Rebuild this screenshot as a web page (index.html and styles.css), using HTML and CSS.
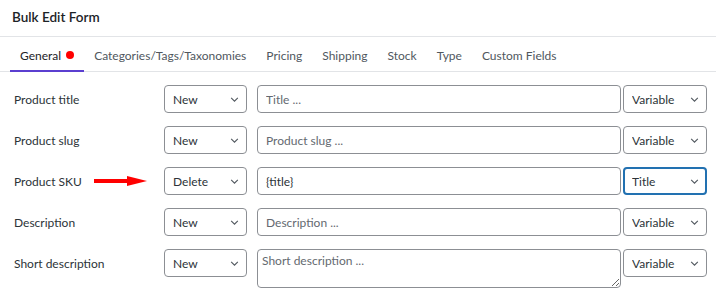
FILE: index.html
```html
<!DOCTYPE html>
<html lang="en">

<head>
    <meta charset="UTF-8" />
    <meta name="viewport" content="width=device-width, initial-scale=1.0" />
    <title>Bulk Edit Form</title>
    <link rel="stylesheet" href="styles.css">
</head>

<body>

    <div class="panel">
        <div class="panel-head">Bulk Edit Form</div>

        <nav class="tabs">
            <a class="tab active" href="#">General <span class="dot"></span></a>
            <a class="tab" href="#">Categories/Tags/Taxonomies</a>
            <a class="tab" href="#">Pricing</a>
            <a class="tab" href="#">Shipping</a>
            <a class="tab" href="#">Stock</a>
            <a class="tab" href="#">Type</a>
            <a class="tab" href="#">Custom Fields</a>
        </nav>

        <form class="fields">
            <div class="row">
                <label class="label">Product title</label>
                <div class="select-wrap action">
                    <select><option>New</option><option>Delete</option></select>
                    <svg class="chev" viewBox="0 0 10 6"><path d="M1 1l4 4 4-4" /></svg>
                </div>
                <input class="text" type="text" placeholder="Title ...">
                <div class="select-wrap var">
                    <select><option>Variable</option><option>Title</option></select>
                    <svg class="chev" viewBox="0 0 10 6"><path d="M1 1l4 4 4-4" /></svg>
                </div>
            </div>

            <div class="row">
                <label class="label">Product slug</label>
                <div class="select-wrap action">
                    <select><option>New</option><option>Delete</option></select>
                    <svg class="chev" viewBox="0 0 10 6"><path d="M1 1l4 4 4-4" /></svg>
                </div>
                <input class="text" type="text" placeholder="Product slug ...">
                <div class="select-wrap var">
                    <select><option>Variable</option><option>Title</option></select>
                    <svg class="chev" viewBox="0 0 10 6"><path d="M1 1l4 4 4-4" /></svg>
                </div>
            </div>

            <div class="row">
                <label class="label">Product SKU</label>
                <svg class="arrow" viewBox="0 0 54 12">
                    <rect x="0" y="4" width="35" height="4" />
                    <polygon points="33,1 53,6 33,11" />
                </svg>
                <div class="select-wrap action">
                    <select><option>Delete</option><option>New</option></select>
                    <svg class="chev" viewBox="0 0 10 6"><path d="M1 1l4 4 4-4" /></svg>
                </div>
                <input class="text" type="text" value="{title}">
                <div class="select-wrap var focus">
                    <select><option>Title</option><option>Variable</option></select>
                    <svg class="chev" viewBox="0 0 10 6"><path d="M1 1l4 4 4-4" /></svg>
                </div>
            </div>

            <div class="row">
                <label class="label">Description</label>
                <div class="select-wrap action">
                    <select><option>New</option><option>Delete</option></select>
                    <svg class="chev" viewBox="0 0 10 6"><path d="M1 1l4 4 4-4" /></svg>
                </div>
                <input class="text" type="text" placeholder="Description ...">
                <div class="select-wrap var">
                    <select><option>Variable</option><option>Title</option></select>
                    <svg class="chev" viewBox="0 0 10 6"><path d="M1 1l4 4 4-4" /></svg>
                </div>
            </div>

            <div class="row row-top">
                <label class="label">Short description</label>
                <div class="select-wrap action">
                    <select><option>New</option><option>Delete</option></select>
                    <svg class="chev" viewBox="0 0 10 6"><path d="M1 1l4 4 4-4" /></svg>
                </div>
                <textarea class="text area" placeholder="Short description ..."></textarea>
                <div class="select-wrap var">
                    <select><option>Variable</option><option>Title</option></select>
                    <svg class="chev" viewBox="0 0 10 6"><path d="M1 1l4 4 4-4" /></svg>
                </div>
            </div>
        </form>
    </div>

</body>

</html>
```

FILE: styles.css
```css
* {
    box-sizing: border-box;
}

body {
    margin: 0;
    background: #fff;
    font-family: "Lato", "Noto Sans", sans-serif;
    font-size: 12px;
    color: #2c3338;
}

.panel-head {
    height: 37px;
    padding: 9px 12px 0;
    font-size: 13.5px;
    font-weight: 600;
    color: #1d2327;
    border-bottom: 1px solid #e2e4e7;
}

.tabs {
    display: flex;
    padding: 0 10px;
    border-bottom: 1px solid #e2e4e7;
}

.tab {
    display: flex;
    align-items: center;
    height: 35px;
    padding: 3px 10px 0;
    color: #50575e;
    text-decoration: none;
    border-bottom: 2px solid transparent;
    margin-bottom: -1px;
}

.tab.active {
    color: #1d2327;
    border-bottom-color: #5b3fd0;
}

.dot {
    width: 8px;
    height: 8px;
    margin-left: 5px;
    border-radius: 50%;
    background: #f00;
}

.fields {
    padding: 13px 9px 0 14px;
}

.row {
    display: flex;
    align-items: center;
    height: 28px;
    margin-bottom: 13px;
    position: relative;
}

.row-top {
    align-items: flex-start;
    height: 39px;
}

.label {
    width: 150px;
    flex-shrink: 0;
    color: #2c3338;
}

.row-top .label {
    padding-top: 7px;
}

.arrow {
    position: absolute;
    left: 80px;
    top: 8px;
    width: 54px;
    height: 12px;
    fill: #f00;
}

.select-wrap {
    position: relative;
    height: 28px;
    flex-shrink: 0;
}

.select-wrap select {
    appearance: none;
    -webkit-appearance: none;
    width: 100%;
    height: 28px;
    padding: 0 22px 0 8px;
    border: 1px solid #8c8f94;
    border-radius: 4px;
    background: #fff;
    font: inherit;
    color: #2c3338;
}

.chev {
    position: absolute;
    right: 8px;
    top: 12px;
    width: 9px;
    height: 5px;
    fill: none;
    stroke: #50575e;
    stroke-width: 1.3;
    pointer-events: none;
}

.action {
    width: 83px;
    margin-right: 10px;
}

.var {
    width: 84px;
    margin-left: 2px;
}

.var.focus select {
    border: 2px solid #2271b1;
    padding-left: 7px;
}

.text {
    width: 366px;
    height: 28px;
    padding: 0 8px;
    border: 1px solid #8c8f94;
    border-radius: 4px;
    font: inherit;
    color: #2c3338;
}

.text::placeholder {
    color: #646970;
}

.area {
    height: 39px;
    width: 365px;
    padding: 3px 4px;
    resize: vertical;
}
```
